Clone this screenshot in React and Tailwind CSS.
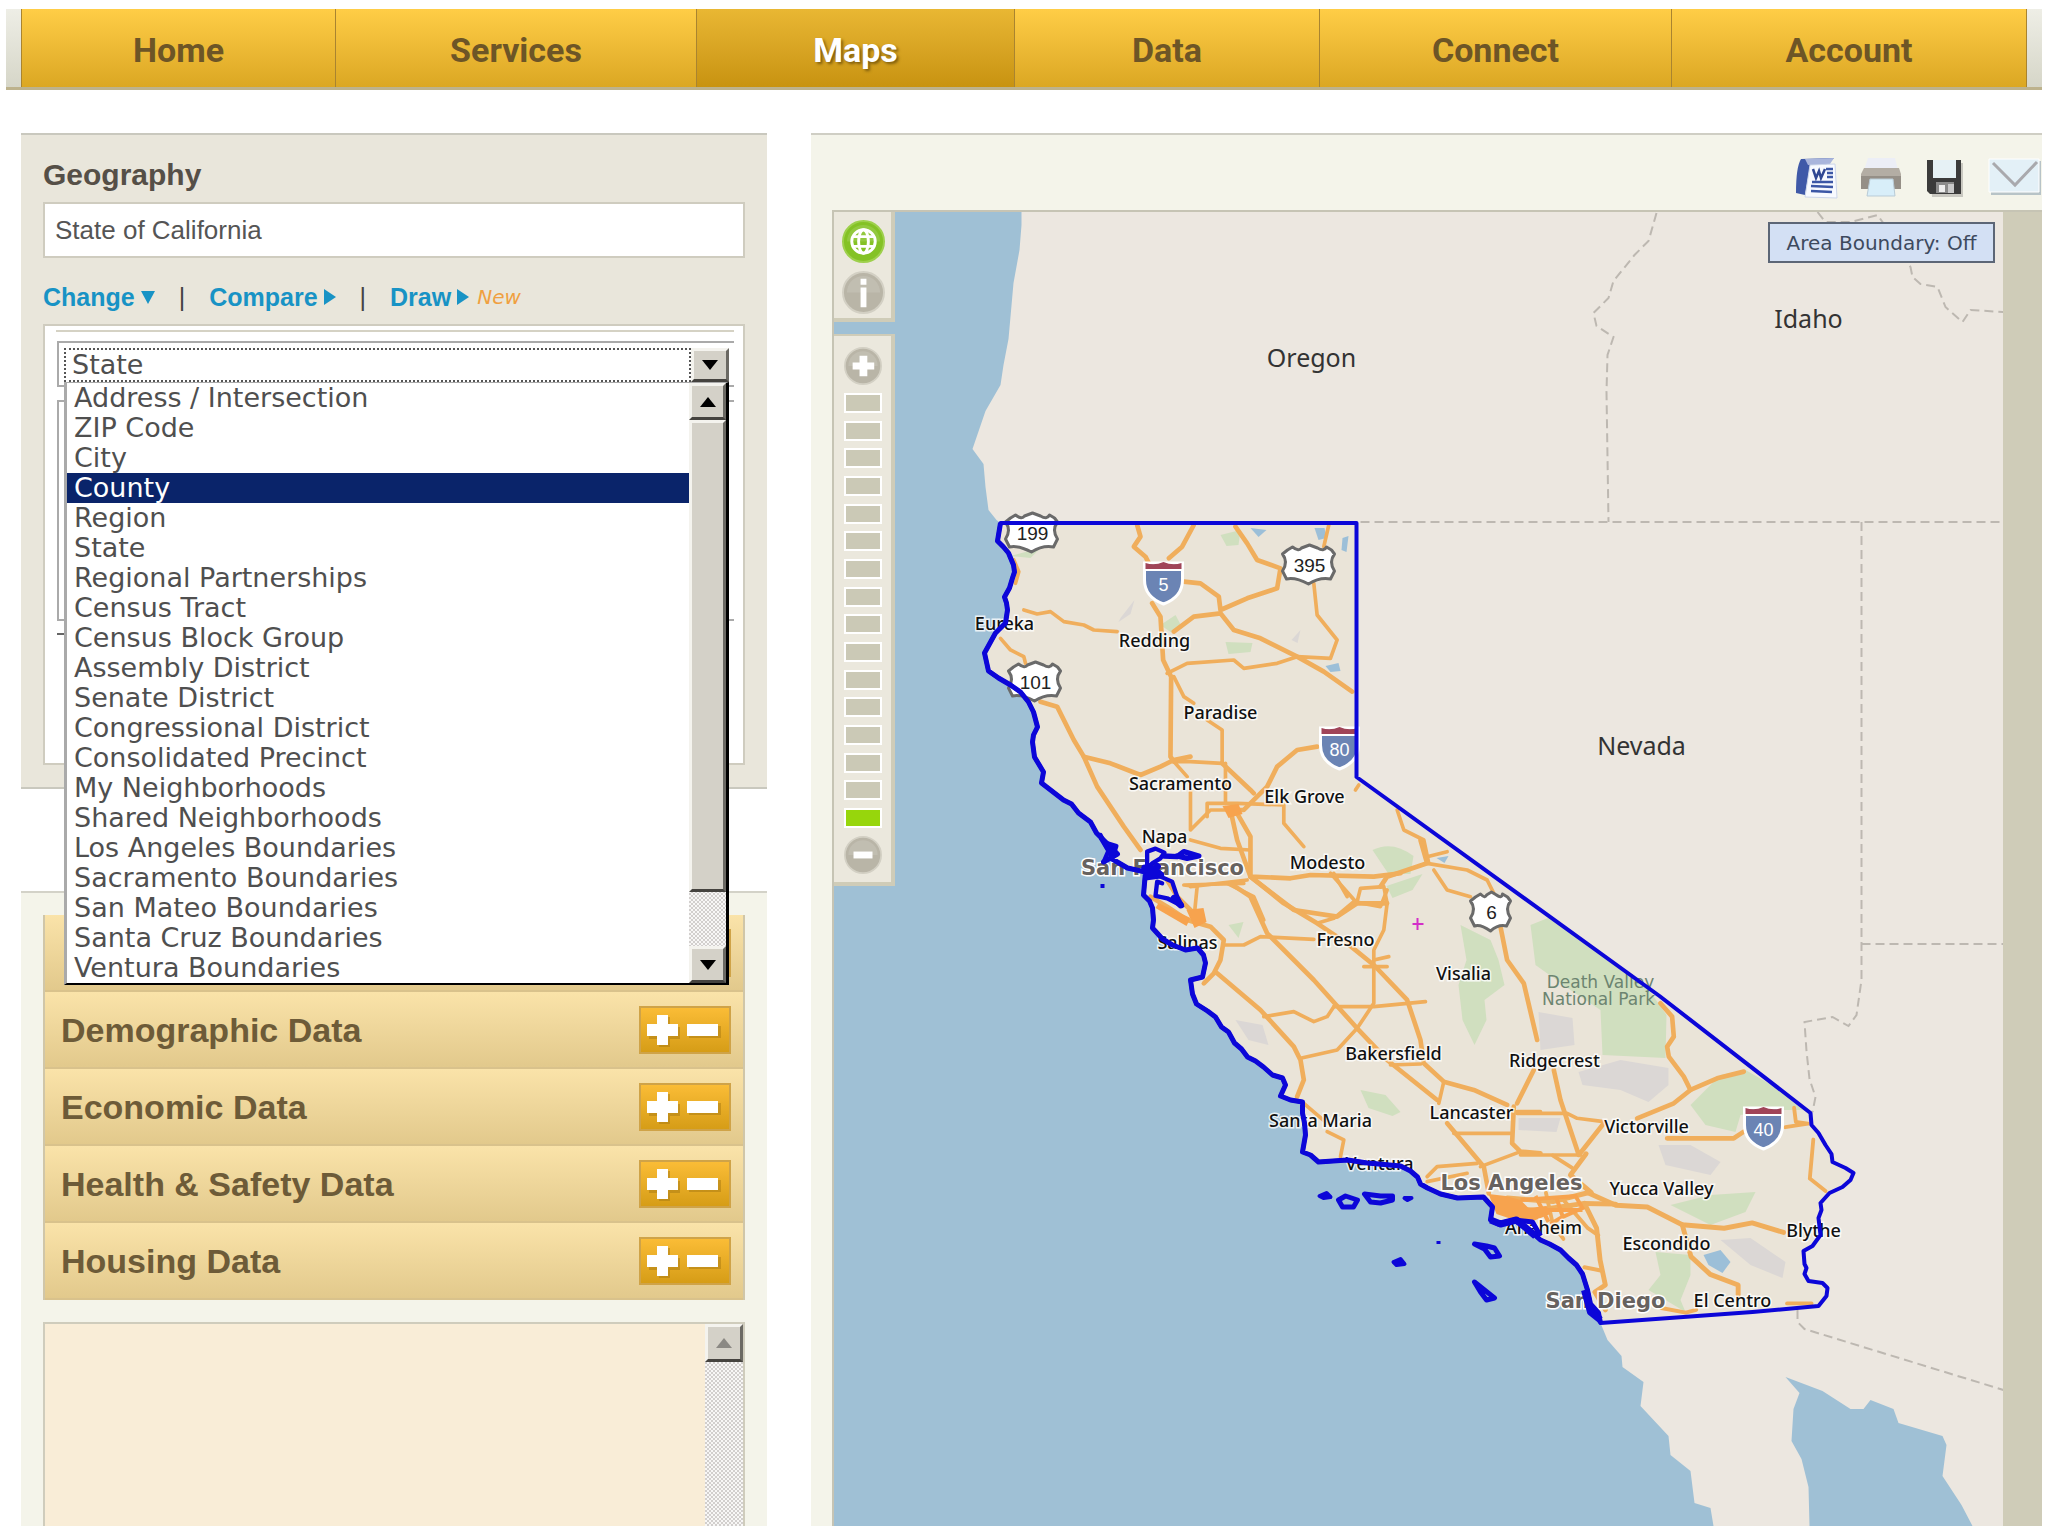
import { useState } from "react";

const tabs = ["Home", "Services", "Maps", "Data", "Connect", "Account"];

const areaTypes = [
  "Address / Intersection",
  "ZIP Code",
  "City",
  "County",
  "Region",
  "State",
  "Regional Partnerships",
  "Census Tract",
  "Census Block Group",
  "Assembly District",
  "Senate District",
  "Congressional District",
  "Consolidated Precinct",
  "My Neighborhoods",
  "Shared Neighborhoods",
  "Los Angeles Boundaries",
  "Sacramento Boundaries",
  "San Mateo Boundaries",
  "Santa Cruz Boundaries",
  "Ventura Boundaries",
];

const dataGroups = ["", "Demographic Data", "Economic Data", "Health & Safety Data", "Housing Data"];

const bevel = "bg-[#d4d1c8] border-[3px] border-t-[#f4f3ee] border-l-[#f4f3ee] border-r-[#6b6963] border-b-[#45433f]";
const dither = "bg-[repeating-conic-gradient(#d2cfcd_0_25%,#f8f7f6_0_50%)] bg-[size:4px_4px]";

function Arrow({ up, className = "fill-black" }) {
  return (
    <svg viewBox="0 0 16 10" className={`w-4 h-[10px] ${className}`} aria-hidden="true">
      <path d={up ? "M8 0l8 10H0z" : "M0 0h16L8 10z"} />
    </svg>
  );
}

function NavBar() {
  const [active, setActive] = useState("Maps");
  return (
    <nav className="grid grid-cols-[15px_314fr_361fr_318fr_305fr_352fr_355fr_16px] mx-[6px] mt-[9px] h-[81px] border-b-[3px] border-[#bdb28c]">
      <span className="bg-linear-to-b from-[#eeeee6] to-[#d6d6c8]" />
      {tabs.map((tab) => (
        <button
          key={tab}
          onClick={() => setActive(tab)}
          className={
            "pt-1 border-l border-[#a98430] font-['Roboto',sans-serif] text-[34px] leading-none font-bold " +
            (tab === active
              ? "bg-linear-to-b from-[#e9b733] to-[#c8930f] text-white [text-shadow:2px_2px_3px_#7d5c0c]"
              : "bg-linear-to-b from-[#ffcd46] to-[#dba722] text-[#6d5526]")
          }
        >
          {tab}
        </button>
      ))}
      <span className="border-l border-[#a98430] bg-linear-to-b from-[#eeeee6] to-[#d6d6c8]" />
    </nav>
  );
}

function AreaTypePicker() {
  const [hovered, setHovered] = useState("County");
  return (
    <div className="relative text-[27px] text-[#4f4f4f] font-['DejaVu_Sans',sans-serif]">
      <div className="flex h-[34px]">
        <select
          aria-label="Area type"
          defaultValue="State"
          className="flex-1 px-[6px] leading-[30px] bg-white border-2 border-dotted appearance-none border-[#555]"
        >
          {areaTypes.map((type) => (
            <option key={type}>{type}</option>
          ))}
        </select>
        <button aria-label="Open list" className={`flex items-center justify-center w-[38px] ${bevel}`}>
          <Arrow />
        </button>
      </div>

      <div className="absolute left-0 z-10 flex w-full bg-white border-t border-l-[3px] border-r-[3px] border-b-2 border-t-[#aaa] border-l-[#aaa] border-r-black border-b-black top-full">
        <ul role="listbox" aria-label="Area types" className="flex-1">
          {areaTypes.map((type) => (
            <li
              key={type}
              role="option"
              aria-selected={type === hovered}
              onMouseEnter={() => setHovered(type)}
              className={"h-[30px] pl-[7px] leading-[30px] whitespace-nowrap " + (type === hovered ? "bg-[#0a246a] text-white" : "")}
            >
              {type}
            </li>
          ))}
        </ul>
        <div className={`flex flex-col w-[37px] ${dither}`}>
          <button aria-label="Scroll up" className={`flex items-center justify-center h-[37px] ${bevel}`}>
            <Arrow up />
          </button>
          <div className={`h-[472px] ${bevel}`} />
          <button aria-label="Scroll down" className={`flex items-center justify-center h-[37px] mt-auto ${bevel}`}>
            <Arrow />
          </button>
        </div>
      </div>
    </div>
  );
}

function GeographyPanel() {
  return (
    <section className="px-[22px] pt-5 pb-[22px] h-[656px] bg-[#e9e6db] border-t-2 border-b-2 border-t-[#c9c8be] border-b-[#c9c8be] flex flex-col">
      <label htmlFor="geo" className="text-[30px] font-bold leading-10 text-[#554f47]">
        Geography
      </label>
      <input
        id="geo"
        defaultValue="State of California"
        className="h-[56px] mt-[7px] px-[10px] text-[26px] text-[#555] bg-white border-2 border-[#cfccbf] shrink-0"
      />
      <div className="flex items-center mt-6 text-[25px] leading-[30px] font-bold text-[#1893c5]">
        <a href="#change" className="flex items-center gap-[6px]">
          Change
          <svg viewBox="0 0 14 13" className="w-[14px] h-[13px] fill-current"><path d="M0 0h14L7 13z" /></svg>
        </a>
        <span className="mx-6 font-normal text-[#444]">|</span>
        <a href="#compare" className="flex items-center gap-[6px]">
          Compare
          <svg viewBox="0 0 12 16" className="w-3 h-4 fill-current"><path d="M0 0l12 8L0 16z" /></svg>
        </a>
        <span className="mx-6 font-normal text-[#444]">|</span>
        <a href="#draw" className="flex items-center gap-[6px]">
          Draw
          <svg viewBox="0 0 12 16" className="w-3 h-4 fill-current"><path d="M0 0l12 8L0 16z" /></svg>
        </a>
        <em className="ml-2 text-xl font-normal text-[#f0a040] font-['DejaVu_Sans',sans-serif]">New</em>
      </div>
      <div className="flex-1 mt-3 bg-white border-2 border-[#cfccbf]">
        <div className="pt-[9px] pl-px mt-1 ml-[11px] mr-[9px] border-t-2 border-[#d5d2c4]">
          <div className="border-2 border-r-0 border-[#aaa] h-[46px] pt-[5px] px-[5px]">
            <AreaTypePicker />
          </div>
          <div className="mt-[13px] h-[221px] border-2 border-r-0 border-[#aaa]" />
          <div className="mt-3 w-2 h-[2px] bg-[#666]" />
        </div>
      </div>
    </section>
  );
}

function PlusMinus() {
  return (
    <svg viewBox="0 0 92 48" className="w-[92px] h-12" aria-hidden="true">
      <defs>
        <linearGradient id="pm" x2="0" y2="1">
          <stop offset="0" stopColor="#fbbd37" />
          <stop offset="1" stopColor="#d59c16" />
        </linearGradient>
      </defs>
      <rect x="1" y="1" width="90" height="46" fill="url(#pm)" stroke="#cfa348" strokeWidth="2" />
      <path d="M20 11h11v10h10v12H31v8H20v-8H10V21h10zM50 20h32v12H50z" fill="#a77a12" opacity=".5" />
      <path d="M18 9h11v9h10v12H29v9H18v-9H8V18h10zM48 18h31v12H48z" fill="#fff" />
    </svg>
  );
}

function DataPanel() {
  return (
    <section className="flex flex-col flex-1 px-[22px] pt-[22px] bg-[#f4f4ea] border-t-2 border-[#d3d2c8]">
      <div className="border-2 border-t-0 border-b-0 border-[#d0c6a8]">
        {dataGroups.map((group) => (
          <button
            key={group}
            aria-label={group || "Data group"}
            className="flex items-center justify-between w-full h-[77px] pl-4 pr-3 border-b-2 border-[#d9c28c] bg-linear-to-b from-[#fae3a9] to-[#e2c98c] text-[34px] leading-none font-bold text-[#6d5b38]"
          >
            <span>{group}</span>
            <PlusMinus />
          </button>
        ))}
      </div>
      <div className="flex justify-end flex-1 mt-[22px] bg-[#f9edd7] border-2 border-b-0 border-[#cfccbc]">
        <div className={`w-[38px] ${dither}`}>
          <button aria-label="Scroll up" className={`flex items-center justify-center w-full h-[38px] ${bevel}`}>
            <Arrow up className="fill-[#8b8984]" />
          </button>
        </div>
      </div>
    </section>
  );
}

function Toolbar() {
  return (
    <div className="flex justify-end h-[75px] pt-[22px] gap-[22px]">
      <button aria-label="Export to Word" className="h-[42px]">
        <svg viewBox="0 0 42 42" className="w-[42px] h-[42px]">
          <path d="M5 2 38 1 30 8 14 10 9 38 0 36Q0 10 5 2z" fill="#3f59a8" />
          <path d="M9 2 38 1 34 7 12 8z" fill="#a9b5dc" />
          <path d="M14 8 39 7 41 41 9 40z" fill="#f8faff" stroke="#cdd6ea" />
          <path d="M17 12l3 9 3-7 2 7 4-9" fill="none" stroke="#2f4793" strokeWidth="2.5" />
          <path d="M30 12h7M31 16h6M31 20h6M16 25h21M15 29l22 1M15 34l21 1" stroke="#3c57a6" strokeWidth="2.4" />
        </svg>
      </button>
      <button aria-label="Print" className="h-[42px]">
        <svg viewBox="0 0 42 42" className="w-[42px] h-[42px]">
          <path d="M8 1h27l3 12H4z" fill="#eceef6" />
          <path d="M4 11h35l2 6v15H1V17z" fill="#b3ada4" />
          <path d="M1 19h40v13H1z" fill="#958f87" />
          <path d="M10 22h23l2 17H7z" fill="#d8eef9" stroke="#b9cbd6" />
        </svg>
      </button>
      <button aria-label="Save" className="h-[42px]">
        <svg viewBox="0 0 42 42" className="w-[42px] h-[42px]">
          <path d="M5 6h34v34H8z" fill="#c9c8c1" />
          <path d="M3 3h34v34H6l-3-3z" fill="#3b3b3b" />
          <path d="M9 3h23v18H9z" fill="#e6f1f5" />
          <path d="M12 25h18v11H12z" fill="#8b8b8b" />
          <path d="M15 28h6v7h-6z" fill="#eee" />
          <path d="M24 27h6v9h-6z" fill="#c9c9c9" />
        </svg>
      </button>
      <button aria-label="Email" className="h-[42px]">
        <svg viewBox="0 0 54 42" className="w-[54px] h-[42px]">
          <path d="M3 4h50v34H3z" fill="#b7c3c7" />
          <path d="M1 2h50v33H1z" fill="#e3f0f7" stroke="#fff" />
          <path d="M5 6l22 22L49 5" fill="none" stroke="#a9a9ad" strokeWidth="3" />
        </svg>
      </button>
    </div>
  );
}

const coast =
  "1000 523 997 541 1003 547 1008 553 1013 565 1014 572 1012 578 1009 588 1004 597 1006 603 1007 610 1005 623 995 633 984 653 986 662 988 671 998 678 1010 685 1020 692 1028 702 1033 712 1037 727 1033 735 1032 742 1034 757 1043 772 1041 783 1063 800 1071 804 1078 813 1090 822 1096 833 1103 840 1117 854 1103 862 1110 858 1127 868 1145 872 1143 895 1149 901 1152 908 1153 920 1152 928 1162 939 1172 945 1185 950 1197 948 1203 955 1205 963 1202 977 1190 980 1192 994 1196 1004 1207 1011 1215 1017 1221 1027 1228 1032 1234 1043 1241 1049 1247 1057 1255 1061 1263 1067 1272 1075 1282 1078 1285 1085 1280 1096 1290 1100 1302 1102 1302 1113 1304 1123 1305 1135 1302 1152 1310 1155 1318 1162 1347 1160 1367 1163 1400 1166 1410 1171 1417 1177 1420 1184 1427 1188 1440 1194 1457 1198 1483 1197 1492 1207 1490 1220 1498 1224 1514 1220 1531 1232 1540 1240 1549 1244 1560 1250 1568 1258 1576 1265 1582 1274 1587 1290 1590 1304 1598 1313 1600 1323";
const inland =
  "1752 1312 1818 1306 1826 1296 1827 1288 1822 1283 1808 1281 1804 1274 1806 1268 1804 1264 1803 1251 1812 1246 1820 1235 1818 1218 1821 1210 1820 1203 1829 1193 1842 1187 1850 1180 1853 1173 1845 1168 1832 1162 1831 1154 1825 1145 1818 1133 1811 1125 1810 1113 1659 996 1356 777 1356 523";

const borders = [
  "M1656 213 1648 241 1634 255 1613 281 1608 298 1593 313 1596 326 1613 337 1607 355 1606 392 1608 522",
  "M1817 212 1825 222 1850 222 1877 215 1895 240 1910 267 1912 277 1920 284 1937 287 1945 307 1962 322 1970 310 2003 312",
  "M1360 522H2003",
  "M1861 522V980L1856 1015 1848 1026 1832 1017 1804 1022 1806 1051 1809 1079 1815 1097 1812 1112",
  "M1861 944H2003",
  "M1797 1310V1322L1804 1329 2003 1390",
];

// Highway segments, one entry per map tile
const roadTiles = [
  {
    transform: "translate(960 500) scale(.3333)",
    major: [
      "M530 75 540 110 520 140 555 170 570 200",
      "M700 75 665 140 625 175",
      "M575 310 600 350 608 480 632 530 630 770 640 785",
      "M825 80 860 130 890 180 960 205 950 265 860 295 780 330 775 290 720 250 670 245",
      "M640 395 700 350 780 340 820 390 900 415 1010 470 1090 515 1175 575",
      "M240 605 290 620 340 720 370 770 450 790 540 825 600 800 640 780 690 770",
      "M370 770 410 860 490 980 540 1050",
      "M785 790 870 870 880 880",
      "M1070 740 1010 750 950 800 920 860 850 930 810 930 830 1020 870 1130 990 1135 1050 1125 1240 1130 1320 1120",
      "M830 940 870 1010 870 1130",
      "M870 1130 1000 1230 1130 1250 1190 1210 1280 1210",
    ],
    minor: [
      "M620 520 680 490 820 480 850 505 950 490 1010 470 1110 475 1130 420 1070 345 1060 250",
      "M190 330 230 342 270 335 310 365 370 375 400 390 470 395",
      "M1105 75 1090 140",
      "M160 180 175 215 165 250",
      "M120 415 150 450 190 470 195 490",
      "M640 530 670 590 700 610",
      "M740 660 785 690 785 790 690 785 640 785 680 830",
      "M795 790V910",
      "M690 870V990L750 930 810 930",
      "M690 1020 780 1045 870 1050",
      "M740 950V910H830L970 915V970L1030 1040",
      "M690 1160 860 1140",
      "M1110 1120 1190 1210",
      "M800 1150 880 1190 910 1260",
      "M1185 870 1195 855",
    ],
  },
  {
    transform: "translate(1100 840) scale(.3333)",
    major: [
      "M150 170 200 200 260 240 330 260 370 300 360 360 340 400 310 430",
      "M200 120 230 170 300 240",
      "M390 130 450 170 500 280 640 420 770 565 860 660 1010 780",
      "M450 110 550 190 650 250 740 310 820 375 920 480 960 600 970 670 1030 725 1120 750 1220 795",
      "M350 400 480 510 580 620 600 660 610 720 590 770",
      "M960 0 980 70 920 90 860 110 840 140",
      "M1200 260 1220 360 1270 430 1310 600",
      "M1300 690 1250 790",
      "M1040 850 1150 980 1165 1060",
      "M1240 800 1235 910 1260 935 1320 940",
    ],
    minor: [
      "M280 240 290 140 250 135 430 130",
      "M370 315 430 315 480 290 640 298",
      "M650 250 700 235 760 185 840 200 860 150",
      "M700 100 740 170",
      "M770 185 780 145 850 140 860 190 850 270 820 330V490L770 565 710 630 600 655",
      "M700 500H820L975 485",
      "M490 530 580 515 640 545 680 530 700 500",
      "M790 380H860M820 360 865 350",
      "M610 790 680 850M680 875 730 900 720 950",
      "M870 675 960 672",
      "M1030 725 1015 790M1060 880H1230M1250 815H1320",
      "M1140 980 1260 935",
      "M980 1010 1010 980 1130 970M980 1025 1100 1000",
      "M980 70 1100 90 1160 120 1180 160M1000 90 1040 150 1110 170M980 50 1040 35",
    ],
  },
  {
    transform: "translate(1340 740) scale(.3333)",
    major: [
      "M890 1135 1000 1090 1050 1050 1130 1015 1210 995",
      "M960 790 995 830 1000 890 980 920 985 950 1030 1010 1050 1050",
      "M640 990 660 1080 715 1245 790 1150",
      "M980 1195H1180L1210 1175",
    ],
    minor: ["M170 210 190 270 250 300 265 370", "M530 1120H680L710 1135 790 1145", "M540 1245H720"],
  },
  {
    transform: "translate(1500 980) scale(.3495 .3546)",
    major: [
      "M250 600 330 635 420 640 520 690 640 700 720 685 810 712",
      "M240 630 275 700 285 790 300 860 270 880 300 930",
      "M520 690 545 780 600 830 680 860 680 890",
      "M245 490 200 550 260 600",
      "M0 640 100 650 240 630 330 632",
      "M20 615 150 625 250 600",
    ],
    minor: [
      "M150 495 205 530",
      "M840 360 845 400 880 405 815 415",
      "M895 450 885 560 930 595",
      "M820 912H890",
      "M460 925 530 938 560 930",
      "M130 600 150 690 180 730M180 620 250 700 280 720",
      "M240 810 290 820",
    ],
  },
];

const parks = [
  "M1372 850Q1392 840 1413 856L1410 874 1388 874Z",
  "M1386 886 1422 874 1412 890 1392 898Z",
  "M1460 925 1490 940 1498 960 1504 985 1484 1000 1486 1020 1474 1045 1462 1020 1458 985 1466 960Z",
  "M1530 925 1550 917 1580 940 1645 985 1666 1015 1665 1058 1602 1055 1600 1010 1570 990 1535 965Z",
  "M1690 1105 1720 1075 1745 1070 1780 1090 1803 1110 1780 1110 1740 1115 1735 1132 1705 1125Z",
  "M1670 1205 1710 1195 1755 1192 1745 1212 1710 1225 1690 1215Z",
  "M1655 1252 1690 1255 1690 1275 1680 1300 1685 1312 1665 1300 1648 1290 1660 1275Z",
  "M1360 1090 1385 1095 1400 1112 1392 1116 1368 1108Z",
  "M1225 642 1252 643 1250 652 1228 654Z",
  "M1220 535 1240 530 1238 545 1226 546Z",
  "M1010 556 1040 548 1030 558Z",
  "M1160 625 1175 615 1182 628 1170 632Z",
  "M1228 925 1243 922 1238 938Z",
];
const deserts = [
  "M1538 1012 1572 1018 1574 1045 1540 1050Z",
  "M1578 1072 1620 1060 1668 1068 1668 1085 1648 1102 1620 1090 1582 1085Z",
  "M1518 1118 1560 1118 1556 1132 1518 1130Z",
  "M1658 1145 1690 1145 1720 1162 1710 1175 1665 1165Z",
  "M1720 1240 1750 1238 1785 1262 1782 1278 1750 1265Z",
  "M1235 1020 1262 1025 1268 1045 1248 1040Z",
  "M1120 618 1134 600 1130 614 1118 622Z",
  "M1291 640 1300 630 1297 643Z",
];
const lakes = [
  "M1703 1255 1720 1250 1730 1262 1722 1273 1708 1265Z",
  "M1436 858 1448 856 1444 863Z",
  "M1314 528 1324 528 1326 538 1318 540Z",
  "M1342 538 1348 536 1346 552 1341 550Z",
  "M1250 528 1266 530 1258 537Z",
  "M1325 666 1338 663 1340 671 1330 672Z",
];

const cities = [
  ["Eureka", 1004, 630],
  ["Redding", 1154, 647],
  ["Paradise", 1220, 719],
  ["Sacramento", 1180, 790],
  ["Elk Grove", 1304, 803],
  ["Napa", 1164, 843],
  ["Modesto", 1327, 869],
  ["Salinas", 1187, 949],
  ["Fresno", 1345, 946],
  ["Visalia", 1463, 980],
  ["Bakersfield", 1393, 1060],
  ["Ridgecrest", 1554, 1067],
  ["Santa Maria", 1320, 1127],
  ["Lancaster", 1471, 1119],
  ["Victorville", 1646, 1133],
  ["Ventura", 1379, 1170],
  ["Yucca Valley", 1661, 1195],
  ["Anaheim", 1543, 1234],
  ["Escondido", 1666, 1250],
  ["Blythe", 1813, 1237],
  ["El Centro", 1732, 1307],
];
const metros = [
  ["San Francisco", 1162, 875],
  ["Los Angeles", 1511, 1190],
  ["San Diego", 1605, 1308],
];
const states = [
  ["Oregon", 1311, 367],
  ["Idaho", 1808, 328],
  ["Nevada", 1641, 755],
];
const usRoutes = [
  ["199", 1032, 533, 26],
  ["395", 1309, 565, 26],
  ["101", 1035, 682, 26],
  ["6", 1491, 912, 20],
];
const interstates = [
  ["5", 1163, 583],
  ["80", 1339, 748],
  ["40", 1763, 1128],
];

function UsShield({ label, x, y, w }) {
  return (
    <g transform={`translate(${x} ${y})`}>
      <path
        d={`M${-w + 4} -15l5 -3q${w / 4} 5 ${w / 2 - 4} 1l${w / 2 - 5} -3 ${w / 2 - 5} 3q${w / 4} 4 ${w / 2 - 4} -1l5 3 3 4q-6 8 0 17l-4 8q-${w / 2 - 2} -2 -${w - 4} 5q-${w / 2} -7 -${w - 4} -5l-4 -8q6 -9 0 -17z`}
        fill="#fff"
        stroke="#6a6a6a"
        strokeWidth="3"
        strokeLinejoin="round"
      />
      <text y="7" textAnchor="middle" fontSize="19" fill="#222" fontFamily="'Liberation Sans', sans-serif">{label}</text>
    </g>
  );
}

function InterstateShield({ label, x, y }) {
  return (
    <g transform={`translate(${x} ${y})`}>
      <path d="M-19 -20H19V-3Q19 14 0 21Q-19 14 -19 -3Z" fill="#6b84b4" stroke="#fff" strokeWidth="3" />
      <path d="M-18 -20Q-9 -17 0 -21Q9 -17 18 -20V-14H-18Z" fill="#a04458" />
      <path d="M-19 -13H19" stroke="#fff" strokeWidth="2" />
      <text y="8" textAnchor="middle" fontSize="18" fill="#fff" fontFamily="'Liberation Sans', sans-serif">{label}</text>
    </g>
  );
}

function CaliforniaMap() {
  return (
    <svg viewBox="833 212 1170 1314" preserveAspectRatio="xMidYMid slice" className="block w-full h-full bg-[#ece7e0]" role="img" aria-label="Map of California">
      <polygon points={`1000 523 ${coast} ${inland}`} fill="#eae4d8" />
      <g fill="#d0dfbf">{parks.map((d) => <path key={d} d={d} />)}</g>
      <g fill="#dbd7d5">{deserts.map((d) => <path key={d} d={d} />)}</g>
      <g fill="#9cbfd8">{lakes.map((d) => <path key={d} d={d} />)}</g>

      {/* Pacific and the Gulf of California */}
      <path
        d={`M833 212H1021L1021 225 1019 250 1013 283 1008 339 1003 365 1000 385 985 411 972 449 983 464 985 487 988 510 996 520L${coast} 1607 1340 1621 1356 1622 1367 1643 1382 1640 1406 1668 1436 1670 1455 1690 1471 1694 1503 1710 1508 1713 1526H833Z`}
        fill="#9fc0d5"
      />
      <path
        d="M1785 1377 1822 1391 1850 1409H1863L1870 1400 1893 1409 1898 1423 1942 1436 1946 1445 1942 1476 1961 1505 1972 1526H1809L1808 1487 1801 1459 1791 1441 1793 1409 1799 1393Z"
        fill="#9fc0d5"
      />

      <g fill="none" stroke="#bdb8b1" strokeWidth="2" strokeDasharray="9 5">
        {borders.map((d) => <path key={d} d={d} />)}
      </g>

      {roadTiles.map((tile) => (
        <g key={tile.transform} transform={tile.transform} fill="none" stroke="#f0ae5c" strokeLinejoin="round" strokeLinecap="round">
          {tile.minor.map((d) => <path key={d} d={d} strokeWidth="11" />)}
          {tile.major.map((d) => <path key={d} d={d} strokeWidth="14" />)}
        </g>
      ))}
      <g fill="#f7a34e">
        <path d="M1488 1194 1505 1196 1520 1200 1528 1208 1546 1206 1550 1214 1530 1222 1508 1218 1496 1214Z" />
        <path d="M1186 910 1203 908 1206 922 1194 928Z" />
        <path d="M1222 806 1238 804 1242 814 1228 818Z" />
        <path d="M1158 903 1190 918 1186 926 1155 908Z" />
      </g>
      <g fill="none" stroke="#f7a34e" strokeWidth="4">
        <path d="M1520 1200 1575 1196 1582 1208 1560 1218 1550 1224M1535 1196 1548 1222M1556 1198 1562 1216M1530 1210H1582" />
      </g>

      <g fontFamily="'Noto Sans', sans-serif" fontSize="18" fill="#111" stroke="#fff" strokeWidth="3" paintOrder="stroke" strokeOpacity=".8" textAnchor="middle" fontWeight="500">
        {cities.map(([name, x, y]) => <text key={name} x={x} y={y}>{name}</text>)}
      </g>
      <g fontFamily="'DejaVu Sans', sans-serif" fontSize="21" fontWeight="700" fill="#67625f" stroke="#fff" strokeWidth="3" paintOrder="stroke" textAnchor="middle">
        {metros.map(([name, x, y]) => <text key={name} x={x} y={y}>{name}</text>)}
      </g>
      <g fontFamily="'Noto Sans', sans-serif" fontSize="25" fill="#333" textAnchor="middle">
        {states.map(([name, x, y]) => <text key={name} x={x} y={y}>{name}</text>)}
      </g>
      <g fontFamily="'DejaVu Sans', sans-serif" fontSize="17" fill="#6c8470" textAnchor="middle">
        <text x="1600" y="988">Death Valley</text>
        <text x="1598" y="1005">National Park</text>
      </g>

      {usRoutes.map(([label, x, y, w]) => <UsShield key={label} label={label} x={x} y={y} w={w} />)}
      {interstates.map(([label, x, y]) => <InterstateShield key={label} label={label} x={x} y={y} />)}

      {/* Selected boundary with the bay and the Channel Islands */}
      <g fill="none" stroke="#0c06d8" strokeWidth="4" strokeLinejoin="round">
        <polygon points={`${coast} ${inland}`} />
        <polyline points={coast} strokeWidth="5" />
        <path d="M1100 838 1112 858 1116 846 1103 842" />
        <path d="M1338 1200 1345 1196 1357 1200 1353 1207 1342 1207ZM1364 1194 1380 1196 1392 1196 1392 1200 1380 1203 1370 1202ZM1514 1220 1532 1222 1540 1236" strokeWidth="5" />
        <path d="M1319 1196 1326 1193 1330 1197 1323 1198ZM1404 1198 1411 1198 1407 1200ZM1393 1262 1400 1259 1404 1264 1396 1265Z" fill="#0c06d8" />
        <path d="M1474 1244 1486 1246 1494 1248 1499 1256 1490 1257 1484 1249ZM1474 1282 1484 1290 1494 1298 1486 1300 1480 1292Z" strokeWidth="5" />
        <path d="M1584 1290 1590 1312 1600 1320" strokeWidth="7" />
        <path d="M1490 1220 1500 1224 1516 1220 1535 1236" strokeWidth="7" />
      </g>
      <g transform="translate(960 500) scale(.3333)" fill="none" stroke="#0c06d8" strokeWidth="13" strokeLinejoin="round" strokeLinecap="round">
        <path d="M560 1055 585 1046 612 1058 600 1075 575 1090 560 1110V1055" />
        <path d="M610 1068 650 1070 670 1055 715 1068 680 1075 650 1068" strokeWidth="16" />
        <path d="M553 1105 580 1110 600 1125 560 1130 590 1100" strokeWidth="22" />
        <path d="M600 1130 635 1145 650 1190 665 1218 620 1195 585 1188 590 1145 605 1150" />
        <path d="M640 1195 660 1215" strokeWidth="20" />
        <path d="M420 1005 440 1045 465 1060 440 1062M430 1085 445 1050" />
      </g>
      <path d="M1100 884h4v4h-4zM1436 1241h4v3h-4z" fill="#0c06d8" />
      <path d="M1412 924h11M1417 918v12" stroke="#d32fc8" strokeWidth="2" />
    </svg>
  );
}

function RoundButton({ label, green, small, children }) {
  return (
    <button aria-label={label} className={small ? "w-[38px] h-[38px]" : "w-[43px] h-[43px]"}>
      <svg viewBox="0 0 44 44" className="w-full h-full">
        <circle cx="22" cy="22" r="21" fill={green ? "#84c225" : "#b9b5a7"} stroke={green ? "#9ed04c" : "#d3d0c4"} strokeWidth="2" />
        <path d="M5 22a17 17 0 0 1 34 0z" fill="#fff" opacity=".12" />
        {children}
      </svg>
    </button>
  );
}

function MapControls() {
  const [zoom, setZoom] = useState(15);
  return (
    <div className="absolute top-0 left-0 w-[61px]">
      <div className="flex flex-col items-center gap-2 h-[110px] pl-px pt-2 bg-[#ebe8dd] border-r-[4px] border-b-[4px] border-[#cfccb8]">
        <RoundButton label="Map" green>
          <g fill="none" stroke="#fff" strokeWidth="3">
            <circle cx="22" cy="22" r="12" />
            <ellipse cx="22" cy="22" rx="5" ry="12" />
            <path d="M11 17h22M11 27h22" />
          </g>
        </RoundButton>
        <RoundButton label="Info">
          <path d="M19 8h6v6h-6zM19 17h6v20h-6z" fill="#fff" />
        </RoundButton>
      </div>
      <div className="flex flex-col items-center mt-3 h-[552px] pl-px pt-[11px] pb-2 bg-[#ebe8dd] border-t-2 border-r-[4px] border-b-[4px] border-[#cfccb8]">
        <RoundButton label="Zoom in" small>
          <path d="M18 10h9v8h8v8h-8v8h-9v-8h-8v-8h8z" fill="#fff" />
        </RoundButton>
        <div className="flex flex-col justify-between flex-1 my-2">
          {Array.from({ length: 16 }, (_, i) => (
            <button
              key={i}
              aria-label={`Zoom level ${16 - i}`}
              onClick={() => setZoom(i)}
              className={"block w-[38px] h-5 border-2 border-white " + (i === zoom ? "bg-[#97d60c]" : "bg-[#cbc9b6]")}
            />
          ))}
        </div>
        <RoundButton label="Zoom out" small>
          <path d="M11 18h22v8H11z" fill="#fff" />
        </RoundButton>
      </div>
    </div>
  );
}

export default function App() {
  return (
    <div className="flex flex-col min-h-screen pb-[10px] overflow-hidden bg-white font-['Liberation_Sans',Arial,sans-serif]">
      <NavBar />
      <main className="grid flex-1 grid-cols-[746fr_1231fr] gap-[44px] pl-[21px] pr-[6px] mt-[43px]">
        <div className="flex flex-col gap-[102px]">
          <GeographyPanel />
          <DataPanel />
        </div>
        <section className="flex flex-col pl-[21px] bg-[#f4f4ea] border-t-2 border-[#cfcec4]">
          <Toolbar />
          <div className="relative flex-1 pr-[39px] bg-[#cfccb8] border-t-2 border-l-2 border-[#c6c4b4]">
            <div className="absolute inset-y-0 left-0 right-[39px]">
              <CaliforniaMap />
            </div>
            <MapControls />
            <button className="absolute top-[10px] right-[47px] w-[227px] h-[41px] bg-[#d3e0f4] border-2 border-[#5c6676] text-xl leading-none text-[#3d4a5e] font-['DejaVu_Sans',sans-serif] whitespace-nowrap">
              Area Boundary: Off
            </button>
          </div>
        </section>
      </main>
    </div>
  );
}
